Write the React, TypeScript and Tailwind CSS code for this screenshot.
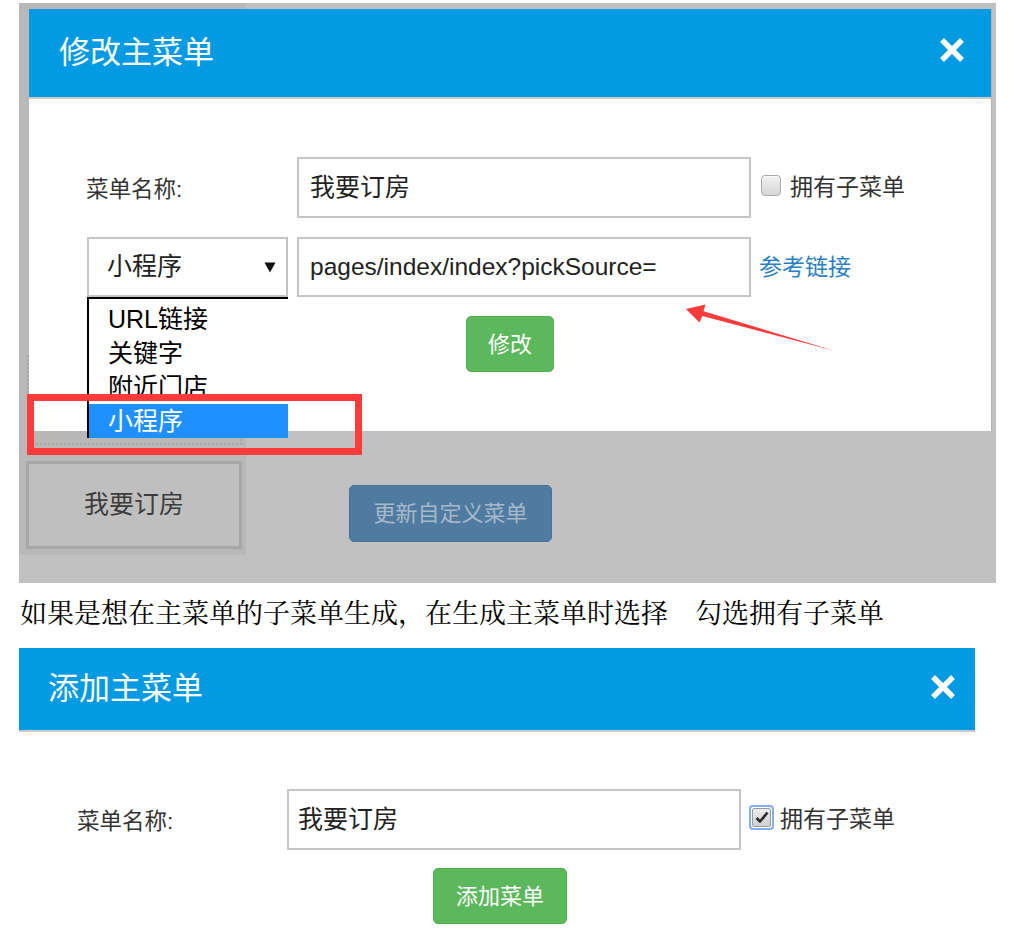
import React from "react";

function CloseIcon() {
  return (
    <svg width="30" height="30" viewBox="0 0 30 30">
      <path d="M5 5 L25 25 M25 5 L5 25" stroke="white" strokeWidth="5.5" strokeLinecap="butt" fill="none" />
    </svg>
  );
}

function UncheckedBox() {
  return (
    <div className="w-[20px] h-[21px] rounded-[4px] border border-[#a9a9a9] bg-gradient-to-b from-[#f2f2f2] to-[#d6d6d6] shadow-[inset_0_1px_1px_rgba(255,255,255,0.8)]" />
  );
}

function CheckedBox() {
  return (
    <div className="w-[25px] h-[25px] rounded-[4px] border-2 border-[#7eaef5] p-[1px] bg-white">
      <div className="w-full h-full rounded-[2px] border border-[#9a9a9a] bg-gradient-to-b from-[#ececec] to-[#cfcfcf] flex items-center justify-center">
        <svg width="14" height="13" viewBox="0 0 14 13">
          <path d="M1.5 7 L5 10.5 L12.5 1.5" stroke="#2b2b2b" strokeWidth="2.6" fill="none" strokeLinejoin="round" />
        </svg>
      </div>
    </div>
  );
}

export default function App() {
  return (
    <div className="relative w-[1036px] h-[938px] bg-white overflow-hidden font-['Liberation_Sans','Noto_Sans_CJK_SC',sans-serif]">
      {/* Top screenshot: backdrop */}
      <div className="relative ml-[19px] mt-[3px] w-[977px] h-[580px] bg-[#c1c1c1] flex">
        {/* left column of background page */}
        <div className="w-[227px] h-[552px] bg-[#b8b8b8] flex flex-col">
          <div className="ml-[8px] mt-[352px] w-[215px] h-[90px] border-2 border-dotted border-[#a6a6a6]" />
          <div className="ml-[7px] mt-[16px] w-[216px] h-[88px] border-[3px] border-[#a7a7a7] bg-[#bfbfbf] flex items-center justify-center text-[25px] text-[#3c3c3c]">
            我要订房
          </div>
        </div>
        {/* right area with update button */}
        <div className="ml-[103px] mt-[482px]">
          <div className="w-[203px] h-[57px] rounded-[5px] bg-[#4f7ba1] border border-[#4a7399] flex items-center justify-center text-[22px] text-[#a7b8c9]">
            更新自定义菜单
          </div>
        </div>

        {/* Modal */}
        <div className="absolute left-[10px] top-[6px] w-[963px] h-[422px] bg-white flex flex-col border-r border-[#b3b3b3]">
          <div className="h-[90px] bg-[#039ae4] border-b-2 border-[#c9c9c9] flex items-center justify-between pl-[30px] pr-[24px]">
            <span className="text-[31px] text-white leading-none mt-[-2px]">修改主菜单</span>
            <div className="mt-[-6px]">
              <CloseIcon />
            </div>
          </div>
          <div className="relative flex-1 pl-[57px] pt-[58px]">
            {/* Row 1 */}
            <div className="flex items-center">
              <div className="w-[211px] text-[22.5px] text-[#333] pt-[4px]">菜单名称:</div>
              <div className="w-[454px] h-[61px] border-2 border-[#c4c4c4] flex items-center pl-[11px] text-[25px] text-[#222]">
                我要订房
              </div>
              <div className="ml-[10px] mt-[-4px]">
                <UncheckedBox />
              </div>
              <span className="ml-[9px] text-[23px] text-[#333]">拥有子菜单</span>
            </div>
            {/* Row 2 */}
            <div className="flex items-center mt-[19px]">
              <div className="ml-[1px] w-[201px] h-[60px] border-2 border-[#c4c4c4] flex items-center justify-between pl-[18px] pr-[10px] text-[25px] text-[#222]">
                <span>小程序</span>
                <svg width="12" height="11" viewBox="0 0 12 11">
                  <path d="M0.5 0.5 L11.5 0.5 L6 10.5 Z" fill="#111" />
                </svg>
              </div>
              <div className="ml-[9px] w-[454px] h-[60px] border-2 border-[#c4c4c4] flex items-center pl-[11px] text-[24.5px] text-[#222]">
                pages/index/index?pickSource=
              </div>
              <span className="ml-[8px] text-[23px] text-[#2a7fc4]">参考链接</span>
            </div>
            {/* Button */}
            <div className="mt-[19px] ml-[380px] w-[88px] h-[56px] rounded-[5px] bg-[#5cb85c] border border-[#4fae4f] flex items-center justify-center text-[22px] text-white">
              修改
            </div>

            {/* Dropdown list */}
            <div className="absolute left-[58px] top-[198px] w-[201px] h-[141px] bg-white border-l-2 border-t-2 border-black pt-[3px] text-[25px] text-black">
              <div className="h-[34px] leading-[34px] pl-[19px]">URL链接</div>
              <div className="h-[34px] leading-[34px] pl-[19px]">关键字</div>
              <div className="h-[34px] leading-[34px] pl-[19px]">附近门店</div>
              <div className="h-[34px] leading-[34px] pl-[19px] bg-[#1e90ff] text-white">小程序</div>
            </div>
          </div>
        </div>
      </div>

      {/* Middle explanatory text */}
      <p className="mt-[15px] ml-[20px] text-[27px] leading-[27px] text-black whitespace-nowrap font-['Noto_Serif_CJK_SC','Noto_Sans_CJK_SC',serif]">
        如果是想在主菜单的子菜单生成，在生成主菜单时选择　勾选拥有子菜单
      </p>

      {/* Bottom modal */}
      <div className="ml-[19px] mt-[23px] w-[956px]">
        <div className="h-[84px] bg-[#039ae4] border-b-2 border-[#c9c9c9] flex items-center justify-between pl-[29px] pr-[17px]">
          <span className="text-[31px] text-white leading-none mt-[-2px]">添加主菜单</span>
          <div className="mt-[-4px]">
            <CloseIcon />
          </div>
        </div>
        <div className="pl-[58px] pt-[57px]">
          <div className="flex items-center">
            <div className="w-[210px] text-[22.5px] text-[#333] pt-[4px]">菜单名称:</div>
            <div className="w-[454px] h-[61px] border-2 border-[#c4c4c4] flex items-center pl-[9px] text-[25px] text-[#222]">
              我要订房
            </div>
            <div className="ml-[8px] mt-[-5px]">
              <CheckedBox />
            </div>
            <span className="ml-[6px] text-[23px] text-[#333]">拥有子菜单</span>
          </div>
          <div className="mt-[18px] ml-[356px] w-[134px] h-[56px] rounded-[5px] bg-[#5cb85c] border border-[#4fae4f] flex items-center justify-center text-[22px] text-white">
            添加菜单
          </div>
        </div>
      </div>

      {/* Annotations: red box and arrow */}
      <div className="absolute left-[27px] top-[394px] w-[335px] h-[61px] border-[7px] border-[#fc3b3b]" />
      <svg className="absolute left-0 top-0 pointer-events-none" width="1036" height="938" viewBox="0 0 1036 938">
        <polygon
          points="686,309 705.5,304.5 703.5,311.3 835,351 702.3,316 699.5,322.5"
          fill="#fb3a3a"
        />
      </svg>
    </div>
  );
}
